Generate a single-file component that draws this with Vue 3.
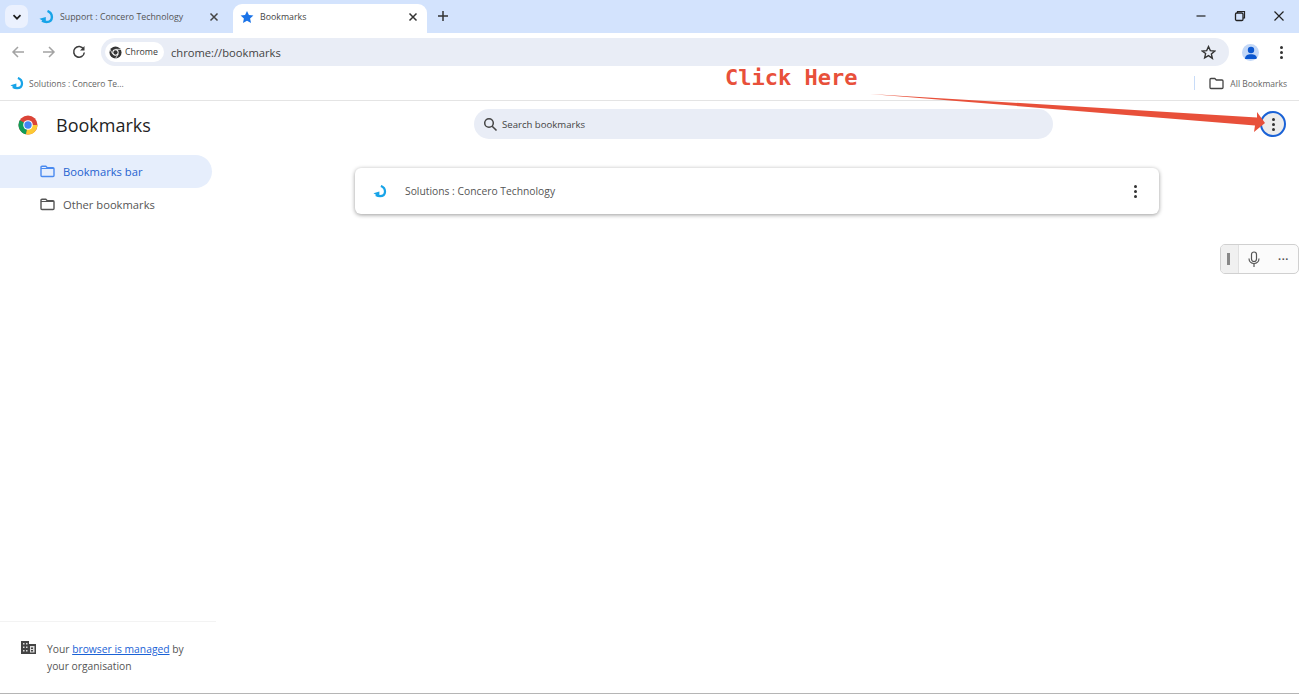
<script setup>
const folders = [
  { name: "Bookmarks bar", active: true },
  { name: "Other bookmarks", active: false }
];
</script>

<template>
  <div class="page">
    <!-- tab strip -->
    <div class="tabstrip">
      <button class="tab-search">
        <svg width="12" height="12" viewBox="0 0 12 12"><path d="M2.5 4.2 6 7.7l3.500-3.500" fill="none" stroke="#1f1f1f" stroke-width="1.7" /></svg>
      </button>
      <div class="tab">
        <svg class="logo" width="15" height="14" viewBox="0 0 15 14"><path d="M8.500 1C14.500 3.500 14.500 12 7.500 12 5.800 12 4.500 11.600 3 10.800" fill="none" stroke="#18a4e8" stroke-width="2.400" /><path d="M.5 8.800 6.800 7v5.800z" fill="#18a4e8" /></svg>
        <span class="tab-title">Support : Concero Technology</span>
        <svg class="tab-x" width="10" height="10" viewBox="0 0 10 10"><path d="M1.500 1.500l7 7m0-7l-7 7" stroke="#444" stroke-width="1.500" /></svg>
      </div>
      <div class="tab active">
        <svg class="logo" width="14" height="14" viewBox="0 0 24 24"><path d="M12 1.500l3.300 7 7.700.9-5.700 5.200 1.600 7.600L12 18.300l-6.900 3.900 1.600-7.600L1 9.400l7.700-.9z" fill="#1a73e8" /></svg>
        <span class="tab-title">Bookmarks</span>
        <svg class="tab-x" width="10" height="10" viewBox="0 0 10 10"><path d="M1.500 1.500l7 7m0-7l-7 7" stroke="#333" stroke-width="1.500" /></svg>
      </div>
      <svg class="new-tab" width="12" height="12" viewBox="0 0 12 12"><path d="M6 1v10M1 6h10" stroke="#333" stroke-width="1.500" /></svg>
      <div class="win-btns">
        <svg width="12" height="12" viewBox="0 0 12 12"><path d="M1.500 6h9" stroke="#222" stroke-width="1.200" /></svg>
        <svg width="12" height="12" viewBox="0 0 12 12"><path d="M3.500 3V1.500h7V8H9" fill="none" stroke="#222" stroke-width="1.200" /><rect x="1.500" y="3" width="7.500" height="7.500" rx="1.200" fill="none" stroke="#222" stroke-width="1.300" /></svg>
        <svg width="12" height="12" viewBox="0 0 12 12"><path d="M1.500 1.500l9 9m0-9l-9 9" stroke="#222" stroke-width="1.200" /></svg>
      </div>
    </div>

    <!-- toolbar -->
    <div class="toolbar">
      <div class="nav">
        <svg width="14" height="14" viewBox="0 0 14 14"><path d="M13 7H2M7 2 2 7l5 5" fill="none" stroke="#a3a3a3" stroke-width="1.500" /></svg>
        <svg width="14" height="14" viewBox="0 0 14 14"><path d="M1 7h11M7 2l5 5-5 5" fill="none" stroke="#a3a3a3" stroke-width="1.500" /></svg>
        <svg width="14" height="14" viewBox="0 0 14 14"><path d="M11.600 4.200A5.300 5.300 0 1 0 12.300 7.500" fill="none" stroke="#3c3c3c" stroke-width="1.500" /><path d="M12.500 1v4.500H8z" fill="#3c3c3c" /></svg>
      </div>
      <div class="omnibox">
        <div class="chip">
          <svg width="13" height="13" viewBox="0 0 14 14"><circle cx="7" cy="7" r="6.500" fill="#333" /><circle cx="7" cy="7" r="3.400" fill="#fff" /><circle cx="7" cy="7" r="2.300" fill="#333" /><path d="M7 3.600h6M4 8.700 1 3.500M10 8.700 7 13.500" stroke="#fff" stroke-width=".8" /></svg>
          <span>Chrome</span>
        </div>
        <span class="url">chrome://bookmarks</span>
        <svg class="star" width="15" height="15" viewBox="0 0 24 24"><path d="M12 2.500l2.900 6.500 7.100.7-5.400 4.700 1.600 7L12 17.100l-6.200 3.600 1.600-7L2 9.700l7.100-.7z" fill="none" stroke="#333" stroke-width="2.200" /></svg>
      </div>
      <div class="avatar">
        <svg width="14" height="14" viewBox="0 0 14 14"><circle cx="7" cy="4" r="3.200" fill="#0b57d0" /><path d="M1 13c0-3.400 2.600-4.800 6-4.800s6 1.400 6 4.800z" fill="#0b57d0" /></svg>
      </div>
      <div class="dots"><i></i><i></i><i></i></div>
    </div>

    <!-- bookmarks bar -->
    <div class="bmbar">
      <svg class="logo" width="14" height="13" viewBox="0 0 15 14"><path d="M8.500 1C14.500 3.500 14.500 12 7.500 12 5.800 12 4.500 11.600 3 10.800" fill="none" stroke="#18a4e8" stroke-width="2.400" /><path d="M.5 8.800 6.800 7v5.800z" fill="#18a4e8" /></svg>
      <span class="bm-title">Solutions : Concero Te...</span>
      <span class="click-here">Click Here</span>
      <span class="bm-sep"></span>
      <svg width="15" height="13" viewBox="0 0 15 13"><path d="M1 2.500c0-.6.400-1 1-1h3.800l1.500 1.500H13c.6 0 1 .4 1 1v6.500c0 .6-.4 1-1 1H2c-.6 0-1-.4-1-1z" fill="none" stroke="#444" stroke-width="1.300" /></svg>
      <span class="bm-all">All Bookmarks</span>
    </div>

    <!-- bookmarks page -->
    <div class="content">
      <aside class="sidebar">
        <div class="brand">
          <svg width="20" height="20" viewBox="0 0 20 20">
            <circle cx="10" cy="10" r="9.500" fill="#db4437" />
            <path d="M10 10 1.770 5.250A9.500 9.500 0 0 0 8 19.300z" fill="#0f9d58" />
            <path d="M10 10h9.500A9.500 9.500 0 0 1 8 19.300z" fill="#fcc934" />
            <circle cx="10" cy="10" r="4.800" fill="#fff" />
            <circle cx="10" cy="10" r="3.700" fill="#4285f4" />
          </svg>
          <h1>Bookmarks</h1>
        </div>
        <nav class="folders">
          <div v-for="f in folders" :key="f.name" class="folder" :class="{ active: f.active }">
            <svg width="15" height="13" viewBox="0 0 15 13"><path d="M1 2.200c0-.6.400-1 1-1h3.800l1.500 1.500H13c.6 0 1 .4 1 1v6.800c0 .6-.4 1-1 1H2c-.6 0-1-.4-1-1z" fill="none" stroke="currentColor" stroke-width="1.400" /><path d="M1 3.500h13" stroke="currentColor" stroke-width="1" /></svg>
            <span>{{ f.name }}</span>
          </div>
        </nav>
        <div class="managed">
          <svg width="15" height="13" viewBox="0 0 15 13"><path d="M0 0h8v3h7v10H0z" fill="#444" /><path d="M2 2h1.500v1.500H2zM5 2h1.500v1.500H5zM2 5.500h1.500V7H2zM5 5.500h1.500V7H5zM2 9h1.500v1.500H2zM5 9h1.500v1.500H5zM9 5h4.500v6.500H9z" fill="#ddd" /><path d="M10 6.500h2V8h-2zM10 9h2v1.500h-2z" fill="#444" /></svg>
          <p>Your <a href="#">browser is managed</a> by your organisation</p>
        </div>
      </aside>

      <main class="list-pane">
        <div class="search-row">
          <div class="search">
            <svg width="15" height="15" viewBox="0 0 15 15"><circle cx="6" cy="6" r="4.300" fill="none" stroke="#444" stroke-width="1.500" /><path d="M9.200 9.200l4.300 4.300" stroke="#444" stroke-width="1.600" /></svg>
            <span>Search bookmarks</span>
          </div>
          <div class="more-btn"><div class="dots"><i></i><i></i><i></i></div></div>
        </div>
        <div class="card">
          <svg class="logo" width="14" height="13" viewBox="0 0 15 14"><path d="M8.500 1C14.500 3.500 14.500 12 7.500 12 5.800 12 4.500 11.600 3 10.800" fill="none" stroke="#18a4e8" stroke-width="2.400" /><path d="M.5 8.800 6.800 7v5.800z" fill="#18a4e8" /></svg>
          <span class="card-title">Solutions : Concero Technology</span>
          <div class="dots"><i></i><i></i><i></i></div>
        </div>
      </main>
    </div>

    <!-- overlays -->
    <svg class="arrow" width="420" height="50" viewBox="0 0 420 50">
      <path d="M2 2 L389 25.500 L389 20 L397 31 L386 40 L387 33.500 Z" fill="#e8503a" />
    </svg>
    <div class="voice">
      <div class="grip"><i></i></div>
      <svg width="14" height="17" viewBox="0 0 14 17"><rect x="4.500" y="1" width="5" height="9.500" rx="2.500" fill="none" stroke="#555" stroke-width="1.200" /><path d="M2 7.500c0 3 2.200 5 5 5s5-2 5-5M7 12.500V16" fill="none" stroke="#555" stroke-width="1.200" /></svg>
      <span class="voice-more">···</span>
    </div>
  </div>
</template>

<style scoped>
.page {
  position: relative;
  width: 1299px;
  height: 694px;
  overflow: hidden;
  background: #fff;
  font-family: "Open Sans", "Noto Sans", sans-serif;
  color: #444;
  display: flex;
  flex-direction: column;
  box-sizing: border-box;
  border-bottom: 1px solid #b5b5b5;
}

.tabstrip {
  height: 33px;
  flex: none;
  display: flex;
  align-items: flex-end;
  background: #d3e3fd;
  padding-left: 5px;
}

.tab-search {
  width: 23px;
  height: 23px;
  margin-bottom: 5px;
  border: none;
  padding: 0;
  border-radius: 7px;
  background: #ebf1fe;
  display: flex;
  align-items: center;
  justify-content: center;
}

.tab {
  width: 205px;
  height: 29px;
  padding: 0 14px 3px 11px;
  box-sizing: border-box;
  display: flex;
  align-items: center;
  font-size: 8.800px;
  color: #555;
  border-radius: 9px 9px 0 0;
}

.tab.active {
  width: 194px;
  background: #fff;
  color: #444;
  padding: 0 9px 3px 7px;
}

.tab-title {
  flex: 1;
  margin-left: 6px;
  white-space: nowrap;
}

.new-tab {
  margin: 0 0 11px 10px;
}

.win-btns {
  margin-left: auto;
  margin-right: 14px;
  height: 33px;
  display: flex;
  align-items: center;
  gap: 27px;
}

.win-btns svg {
  margin-top: -2px;
}

.toolbar {
  height: 33px;
  flex: none;
  display: flex;
  align-items: flex-end;
  background: #fff;
  border-radius: 10px 10px 0 0;
}

.nav {
  width: 101px;
  height: 28px;
  padding-left: 11px;
  box-sizing: border-box;
  display: flex;
  align-items: center;
  gap: 16.500px;
}

.omnibox {
  width: 1128px;
  height: 28px;
  box-sizing: border-box;
  padding: 0 13px 0 4px;
  display: flex;
  align-items: center;
  border-radius: 14px;
  background: #e9edf6;
}

.chip {
  height: 20px;
  padding: 0 6px 0 4px;
  display: flex;
  align-items: center;
  gap: 3px;
  border-radius: 10px;
  background: #fff;
  font-size: 8.800px;
  font-weight: 500;
  color: #3a3a3a;
}

.url {
  margin-left: 7px;
  font-size: 11.200px;
  color: #444;
  flex: 1;
}

.avatar {
  width: 17px;
  height: 17px;
  margin: 0 0 5px 13px;
  border-radius: 50%;
  background: #c2d7f7;
  display: flex;
  align-items: center;
  justify-content: center;
  overflow: hidden;
}

.toolbar .dots {
  margin: 0 0 7px 21px;
}

.dots {
  display: flex;
  flex-direction: column;
  gap: 2px;
}

.dots i {
  display: block;
  width: 3px;
  height: 3px;
  border-radius: 50%;
  background: #333;
}

.bmbar {
  height: 35px;
  flex: none;
  box-sizing: border-box;
  border-bottom: 1px solid #e4e4e4;
  display: flex;
  align-items: center;
  padding: 0 12px 0 10px;
  font-size: 8.500px;
  color: #666;
}

.bm-title {
  margin-left: 5px;
}

.click-here {
  position: absolute;
  left: 725px;
  top: 65px;
  font-family: "DejaVu Sans Mono", monospace;
  font-weight: 700;
  font-size: 22px;
  color: #e8503a;
}

.bm-sep {
  width: 1px;
  height: 14px;
  margin-left: auto;
  margin-right: 14px;
  background: #c8dcf8;
}

.bm-all {
  margin-left: 6px;
}

.content {
  flex: 1;
  display: flex;
  min-height: 0;
}

.sidebar {
  width: 216px;
  flex: none;
  display: flex;
  flex-direction: column;
}

.brand {
  height: 54px;
  padding: 0 0 7px 18px;
  display: flex;
  align-items: center;
  gap: 18px;
  box-sizing: border-box;
}

.brand h1 {
  margin: 0;
  font-size: 18px;
  font-weight: 400;
  color: #1f1f1f;
}

.folders {
  display: flex;
  flex-direction: column;
}

.folder {
  width: 212px;
  height: 33px;
  box-sizing: border-box;
  padding-left: 40px;
  display: flex;
  align-items: center;
  gap: 8px;
  font-size: 11.200px;
  font-weight: 500;
  color: #555;
  border-radius: 0 17px 17px 0;
}

.folder.active {
  background: #e6eefc;
  color: #1f62d0;
}

.folder.active svg {
  color: #4a8af0;
}

.managed {
  margin-top: auto;
  height: 72px;
  box-sizing: border-box;
  border-top: 1px solid #f3f3f3;
  padding: 19px 22px 0 21px;
  display: flex;
  gap: 11px;
  font-size: 10.300px;
  line-height: 17px;
  color: #555;
}

.managed svg {
  flex: none;
}

.managed p {
  margin: 0;
}

.managed a {
  color: #1a62d6;
}

.list-pane {
  flex: 1;
  min-width: 0;
  display: flex;
  flex-direction: column;
}

.search-row {
  height: 67px;
  flex: none;
  display: flex;
  align-items: flex-start;
  padding: 8px 13px 0 258px;
  box-sizing: border-box;
}

.search {
  width: 579px;
  height: 30px;
  box-sizing: border-box;
  padding-left: 9px;
  display: flex;
  align-items: center;
  gap: 4px;
  border-radius: 15px;
  background: #e9edf6;
  font-size: 9.600px;
  color: #444;
}

.more-btn {
  width: 26px;
  height: 26px;
  margin-left: auto;
  box-sizing: border-box;
  border: 2px solid #1a62d6;
  border-radius: 50%;
  background: #ececec;
  display: flex;
  align-items: center;
  justify-content: center;
  margin-top: 2px;
}

.card {
  width: 804px;
  height: 46px;
  margin-left: 139px;
  box-sizing: border-box;
  padding: 0 22px 0 18px;
  display: flex;
  align-items: center;
  border-radius: 6px;
  background: #fff;
  box-shadow: 0 1px 4px rgba(0, 0, 0, 0.4);
}

.card-title {
  flex: 1;
  margin-left: 18px;
  font-size: 10.300px;
  color: #555;
}

.arrow {
  position: absolute;
  left: 868px;
  top: 92px;
}

.voice {
  position: absolute;
  left: 1220px;
  top: 244px;
  width: 79px;
  height: 30px;
  box-sizing: border-box;
  border: 1px solid #d0d0d0;
  border-radius: 5px;
  background: #fbfbfb;
  display: flex;
  align-items: center;
}

.grip {
  width: 17px;
  height: 100%;
  background: #f0f0f0;
  border-right: 1px solid #e0e0e0;
  border-radius: 4px 0 0 4px;
  display: flex;
  align-items: center;
  justify-content: center;
}

.grip i {
  display: block;
  width: 3px;
  height: 12px;
  margin-right: 2px;
  background: #888;
}

.voice svg {
  margin-left: 8px;
}

.voice-more {
  margin-left: 17px;
  font-size: 11px;
  font-weight: 700;
  color: #555;
  font-family: "Liberation Sans", sans-serif;
}
</style>
